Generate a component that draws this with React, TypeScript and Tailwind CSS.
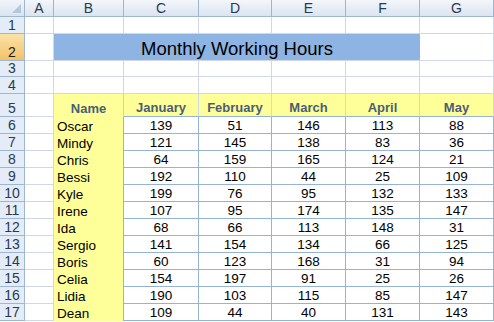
const cols = ["A", "B", "C", "D", "E", "F", "G"];
const colWidths = "grid-cols-[25px_29px_70px_75px_73px_74px_74px_74px]";

const months = ["January", "February", "March", "April", "May"];

const people: [string, number[]][] = [
  ["Oscar", [139, 51, 146, 113, 88]],
  ["Mindy", [121, 145, 138, 83, 36]],
  ["Chris", [64, 159, 165, 124, 21]],
  ["Bessi", [192, 110, 44, 25, 109]],
  ["Kyle", [199, 76, 95, 132, 133]],
  ["Irene", [107, 95, 174, 135, 147]],
  ["Ida", [68, 66, 113, 148, 31]],
  ["Sergio", [141, 154, 134, 66, 125]],
  ["Boris", [60, 123, 168, 31, 94]],
  ["Celia", [154, 197, 91, 25, 26]],
  ["Lidia", [190, 103, 115, 85, 147]],
  ["Dean", [109, 44, 40, 131, 143]],
];

function RowHead({ n, h, active }: { n: number; h: string; active?: boolean }) {
  return (
    <div
      className={`${h} flex items-end justify-center border-r border-b border-[#9eb6ce] pb-[1px] text-[14px] leading-none ${
        active
          ? "bg-gradient-to-b from-[#fbe2a8] to-[#f3c266] text-[#1b1b1b]"
          : "bg-[#e4ecf7] text-[#283a52]"
      }`}
    >
      {n}
    </div>
  );
}

function Blank({ h, cls = "" }: { h: string; cls?: string }) {
  return <div className={`${h} border-r border-b border-[#d0d7e5] bg-white ${cls}`} />;
}

export default function App() {
  return (
    <div className="h-[322px] w-[494px] overflow-hidden bg-white font-['Liberation_Sans',Arial,sans-serif]">
      <div className={`grid ${colWidths}`}>
        {/* column headers */}
        <div className="relative h-[17px] border-r border-b border-[#9eb6ce] bg-gradient-to-b from-[#f1f5fb] to-[#d9e3f0]">
          <div className="absolute right-[3px] bottom-[3px] h-0 w-0 border-t-[9px] border-l-[9px] border-t-transparent border-l-transparent border-b-0 border-r-[9px] border-r-[#b6c7dc]" />
        </div>
        {cols.map((c) => (
          <div
            key={c}
            className="flex h-[17px] items-center justify-center border-r border-b border-[#9eb6ce] bg-gradient-to-b from-[#f3f6fb] to-[#dbe4f0] text-[14px] leading-none text-[#283a52]"
          >
            {c}
          </div>
        ))}

        {/* row 1 */}
        <RowHead n={1} h="h-[17px]" />
        {cols.map((c) => (
          <Blank key={c} h="h-[17px]" />
        ))}

        {/* row 2 */}
        <RowHead n={2} h="h-[27px]" active />
        <Blank h="h-[27px]" />
        <div className="col-span-5 flex h-[27px] items-end justify-center border-b border-[#d0d7e5] bg-[#8db4e2] pb-[2px] text-[18.5px] leading-none text-black">
          Monthly Working Hours
        </div>
        <Blank h="h-[27px]" />

        {/* row 3, 4 */}
        <RowHead n={3} h="h-[16px]" />
        {cols.map((c) => (
          <Blank key={c} h="h-[16px]" />
        ))}
        <RowHead n={4} h="h-[17px]" />
        {cols.map((c) => (
          <Blank key={c} h="h-[17px]" />
        ))}

        {/* row 5 */}
        <RowHead n={5} h="h-[23px]" />
        <Blank h="h-[23px]" />
        {["Name", ...months].map((m, i) => (
          <div
            key={m}
            className={`flex h-[23px] items-end justify-center border-r bg-[#ffff99] pb-[2px] text-[13px] leading-none font-bold text-[#4b5d76] ${
              i === 0 ? "border-[#d6d6a0]" : "border-[#d0d7e5]"
            } ${i === 0 ? "" : "border-b border-b-[#95b3d7]"}`}
          >
            {m}
          </div>
        ))}

        {/* data rows */}
        {people.map(([name, vals], r) => (
          <div key={name} className="contents">
            <RowHead n={r + 6} h="h-[17px]" />
            <Blank h="h-[17px]" />
            <div className="flex h-[17px] items-end border-r border-[#95b3d7] bg-[#ffff99] pb-[1px] pl-[3px] text-[13.5px] leading-none text-black">
              {name}
            </div>
            {vals.map((v, i) => (
              <div
                key={i}
                className="flex h-[17px] items-end justify-center border-r border-b border-[#95b3d7] bg-white pb-[1px] text-[13.5px] leading-none text-black"
              >
                {v}
              </div>
            ))}
          </div>
        ))}
      </div>
    </div>
  );
}
